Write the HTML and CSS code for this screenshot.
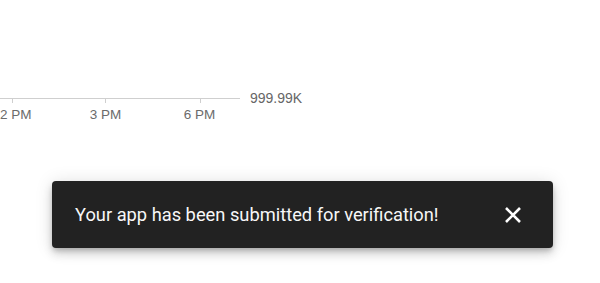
FILE: index.html
```html
<!DOCTYPE html>
<html lang="en">
<head>
<meta charset="utf-8">
<title>Snackbar</title>
<link rel="stylesheet" href="styles.css">
</head>
<body>
<div class="page">
  <svg class="axis" width="320" height="40" viewBox="0 0 320 40" xmlns="http://www.w3.org/2000/svg">
    <line x1="0" y1="10.5" x2="240" y2="10.5" stroke="#cfcfcf" stroke-width="1"/>
    <line x1="12.5" y1="10" x2="12.5" y2="15" stroke="#cfcfcf" stroke-width="1"/>
    <line x1="105.5" y1="10" x2="105.5" y2="15" stroke="#cfcfcf" stroke-width="1"/>
    <line x1="200.5" y1="10" x2="200.5" y2="15" stroke="#cfcfcf" stroke-width="1"/>
    <text class="tick-label" x="12" y="31" text-anchor="middle">12 PM</text>
    <text class="tick-label" x="105.5" y="31" text-anchor="middle">3 PM</text>
    <text class="tick-label" x="199.5" y="31" text-anchor="middle">6 PM</text>
    <text class="value-label" x="250" y="15">999.99K</text>
  </svg>
  <div class="snackbar">
    <span class="snackbar-text">Your app has been submitted for verification!</span>
    <button class="snackbar-close" aria-label="Close">
      <svg width="18" height="18" viewBox="0 0 18 18" xmlns="http://www.w3.org/2000/svg">
        <path d="M2 2 L16 16 M16 2 L2 16" stroke="#ffffff" stroke-width="2.6" stroke-linecap="butt"/>
      </svg>
    </button>
  </div>
</div>
</body>
</html>
```
FILE: styles.css
```css
html, body {
  margin: 0;
  padding: 0;
  background: #ffffff;
}

.page {
  width: 600px;
  height: 283px;
  overflow: hidden;
  padding-top: 88px;
  box-sizing: border-box;
  font-family: Roboto, "Liberation Sans", sans-serif;
}

.axis {
  display: block;
  overflow: visible;
}

.tick-label {
  font-family: "Liberation Sans", Arial, sans-serif;
  font-size: 13.5px;
  fill: #6b6b6b;
}

.value-label {
  font-family: "Liberation Sans", Arial, sans-serif;
  font-size: 14px;
  fill: #666666;
}

.snackbar {
  margin-top: 53px;
  margin-left: 52px;
  width: 501px;
  height: 67px;
  box-sizing: border-box;
  display: flex;
  align-items: center;
  justify-content: space-between;
  padding: 0 31px 0 23px;
  background: #222222;
  border-radius: 4px;
  box-shadow: 0 3px 5px -1px rgba(0, 0, 0, 0.2), 0 6px 10px 0 rgba(0, 0, 0, 0.14), 0 1px 18px 0 rgba(0, 0, 0, 0.12);
}

.snackbar-text {
  color: #f7f7f7;
  font-size: 18.3px;
  line-height: 22px;
  letter-spacing: 0;
}

.snackbar-close {
  display: flex;
  padding: 0;
  margin: 0;
  border: 0;
  background: transparent;
  cursor: pointer;
}
```
